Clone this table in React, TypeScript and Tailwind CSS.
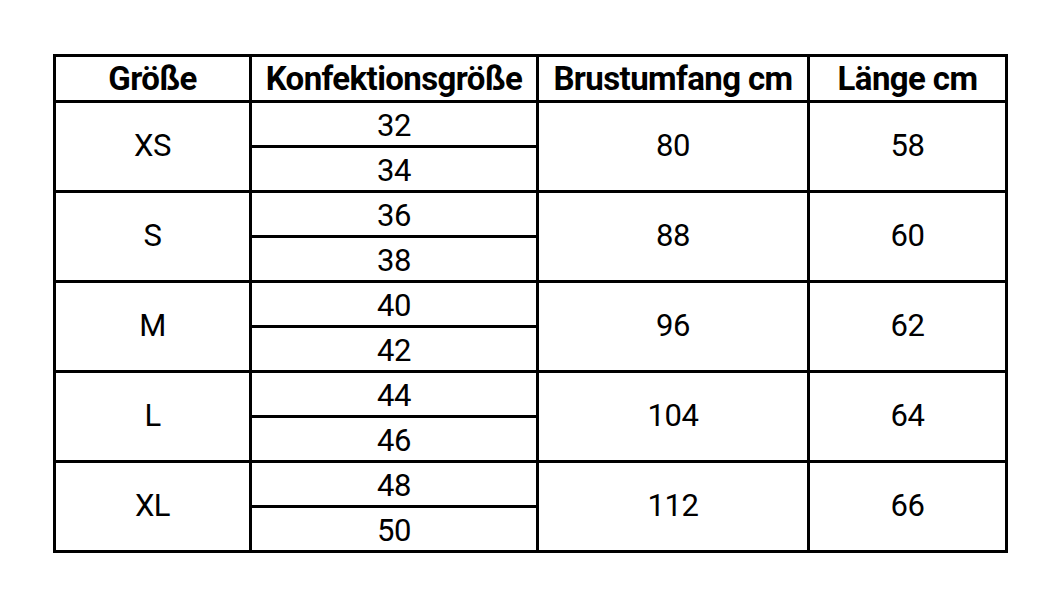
const groups = [
  { size: 'XS', konf: ['32', '34'], brust: '80', laenge: '58' },
  { size: 'S', konf: ['36', '38'], brust: '88', laenge: '60' },
  { size: 'M', konf: ['40', '42'], brust: '96', laenge: '62' },
  { size: 'L', konf: ['44', '46'], brust: '104', laenge: '64' },
  { size: 'XL', konf: ['48', '50'], brust: '112', laenge: '66' },
]

const cell = 'border-[3px] border-black text-center align-middle p-0'

export default function App() {
  return (
    <div className="w-[1063px] h-[604px] bg-white pt-[54px] pl-[53px]" style={{ fontFamily: 'Roboto, "Liberation Sans", sans-serif' }}>
      <table className="border-collapse table-fixed w-[952px] text-black">
        <colgroup>
          <col className="w-[196px]" />
          <col className="w-[287px]" />
          <col className="w-[271px]" />
          <col className="w-[198px]" />
        </colgroup>
        <thead>
          <tr className="h-[46px]">
            {['Größe', 'Konfektionsgröße', 'Brustumfang cm', 'Länge cm'].map(h => (
              <th key={h} className={`${cell} text-[33px] font-bold tracking-[-0.6px] leading-none`}>{h}</th>
            ))}
          </tr>
        </thead>
        <tbody className="text-[31px] tracking-[-0.5px]">
          {groups.map(g => (
            <>
              <tr key={g.size + 'a'} className="h-[45px]">
                <td rowSpan={2} className={cell}>{g.size}</td>
                <td className={`${cell} leading-none pt-[3px]`}>{g.konf[0]}</td>
                <td rowSpan={2} className={cell}>{g.brust}</td>
                <td rowSpan={2} className={cell}>{g.laenge}</td>
              </tr>
              <tr key={g.size + 'b'} className="h-[45px]">
                <td className={`${cell} leading-none pt-[3px]`}>{g.konf[1]}</td>
              </tr>
            </>
          ))}
        </tbody>
      </table>
    </div>
  )
}
